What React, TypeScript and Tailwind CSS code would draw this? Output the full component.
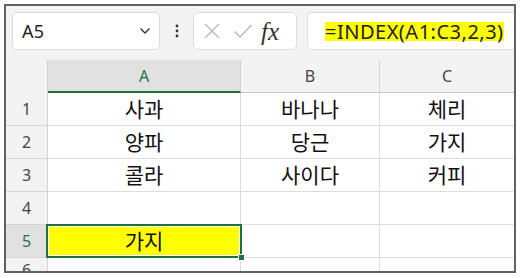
import React from "react";

const kr = { fontFamily: '"Noto Sans CJK KR", "Noto Sans", sans-serif' };
const ui = { fontFamily: '"Noto Sans", "Open Sans", sans-serif' };

const rows: [string, string, string][] = [
  ["사과", "바나나", "체리"],
  ["양파", "당근", "가지"],
  ["콜라", "사이다", "커피"],
  ["", "", ""],
];

export default function App() {
  return (
    <div className="w-[520px] h-[278px] bg-white pt-[4px] pl-[4px]">
      <div className="w-[512px] h-[269px] border-2 border-[#616161] bg-[#f3f3f3] flex flex-col overflow-hidden">
        {/* toolbar */}
        <div className="h-[54px] shrink-0 flex items-start pt-[6px] pl-[6px]" style={ui}>
          <div className="w-[148px] h-[38px] bg-white border border-[#dcdcdc] rounded-[5px] flex items-center pl-[9px] pr-[8px]">
            <span className="text-[18px] text-[#222] leading-none tracking-[0.3px]">A5</span>
            <svg className="ml-auto" width="12" height="8" viewBox="0 0 12 8">
              <path d="M1.5 1.5 L6 6 L10.5 1.5" stroke="#333" strokeWidth="1.4" fill="none" />
            </svg>
          </div>
          <div className="w-[33px] h-[38px] flex items-center justify-center">
            <svg width="4" height="14" viewBox="0 0 4 14">
              <circle cx="2" cy="2" r="1.4" fill="#333" />
              <circle cx="2" cy="7" r="1.4" fill="#333" />
              <circle cx="2" cy="12" r="1.4" fill="#333" />
            </svg>
          </div>
          <div className="w-[104px] h-[38px] bg-white border border-[#dcdcdc] rounded-[5px] flex items-center pl-[9px]">
            <svg width="18" height="18" viewBox="0 0 18 18">
              <path d="M2 2 L16 16 M16 2 L2 16" stroke="#b5b5b5" strokeWidth="1.3" fill="none" />
            </svg>
            <svg className="ml-[12px]" width="20" height="16" viewBox="0 0 20 16">
              <path d="M1.5 8.5 L7 14 L18.5 2" stroke="#b5b5b5" strokeWidth="1.3" fill="none" />
            </svg>
            <span
              className="ml-[8px] text-[25px] italic text-[#333] leading-none"
              style={{ fontFamily: '"Liberation Serif", "DejaVu Serif", serif' }}
            >
              fx
            </span>
          </div>
          <div className="ml-[10px] flex-1 h-[38px] bg-white border border-[#dcdcdc] border-r-0 rounded-l-[5px] flex items-center pl-[17px]">
            <span className="text-[20px] text-[#222] leading-[19px] tracking-[0.5px] bg-[#ffff00]">=INDEX(A1:C3,2,3)</span>
          </div>
        </div>
        {/* grid */}
        <div
          className="grid grid-cols-[42px_193px_139px_1fr] grid-rows-[33px_33px_33px_33px_33px_33px_33px] bg-white"
          style={ui}
        >
          <div className="bg-[#f3f3f3] border-r border-[#d4d4d4]" />
          <div className="bg-[#e1e1e1] border-r border-[#d4d4d4] border-b-2 border-b-[#1e7145] flex items-center justify-center text-[16px] text-[#1e7145]">
            A
          </div>
          <div className="bg-[#f3f3f3] border-r border-[#d4d4d4] border-b border-b-[#c8c8c8] flex items-center justify-center text-[16px] text-[#444]">
            B
          </div>
          <div className="bg-[#f3f3f3] border-b border-b-[#c8c8c8] flex items-center justify-center text-[16px] text-[#444]">
            C
          </div>
          {rows.map((r, i) => (
            <React.Fragment key={i}>
              <div className="bg-[#f3f3f3] border-r border-b border-[#d4d4d4] flex items-center justify-center text-[16px] text-[#444]">
                {i + 1}
              </div>
              {r.map((c, j) => (
                <div
                  key={j}
                  className={`border-b border-[#dcdcdc] flex items-center justify-center text-[21px] text-[#111] ${j < 2 ? "border-r" : ""}`}
                  style={kr}
                >
                  {c}
                </div>
              ))}
            </React.Fragment>
          ))}
          <div className="bg-[#e1e1e1] border-r border-b border-[#d4d4d4] flex items-center justify-center text-[16px] text-[#1e7145]">
            5
          </div>
          <div className="relative border-b border-[#dcdcdc]">
            <div className="absolute left-[-2px] top-[-1px] right-[-1px] bottom-[-1px] border-2 border-[#1e7145] bg-[#ffff00] flex items-center justify-center outline outline-1 outline-white -outline-offset-[3px]">
              <span className="text-[21px] text-[#111]" style={kr}>가지</span>
            </div>
            <div className="absolute right-[-4px] bottom-[-4px] w-[7px] h-[7px] bg-[#1e7145] border border-white" />
          </div>
          <div className="border-r border-b border-[#dcdcdc]" />
          <div className="border-b border-[#dcdcdc]" />
          <div className="bg-[#f3f3f3] border-r border-[#d4d4d4] flex items-start justify-center text-[16px] text-[#444]">
            6
          </div>
          <div className="border-r border-[#dcdcdc]" />
          <div className="border-r border-[#dcdcdc]" />
          <div />
        </div>
      </div>
    </div>
  );
}
